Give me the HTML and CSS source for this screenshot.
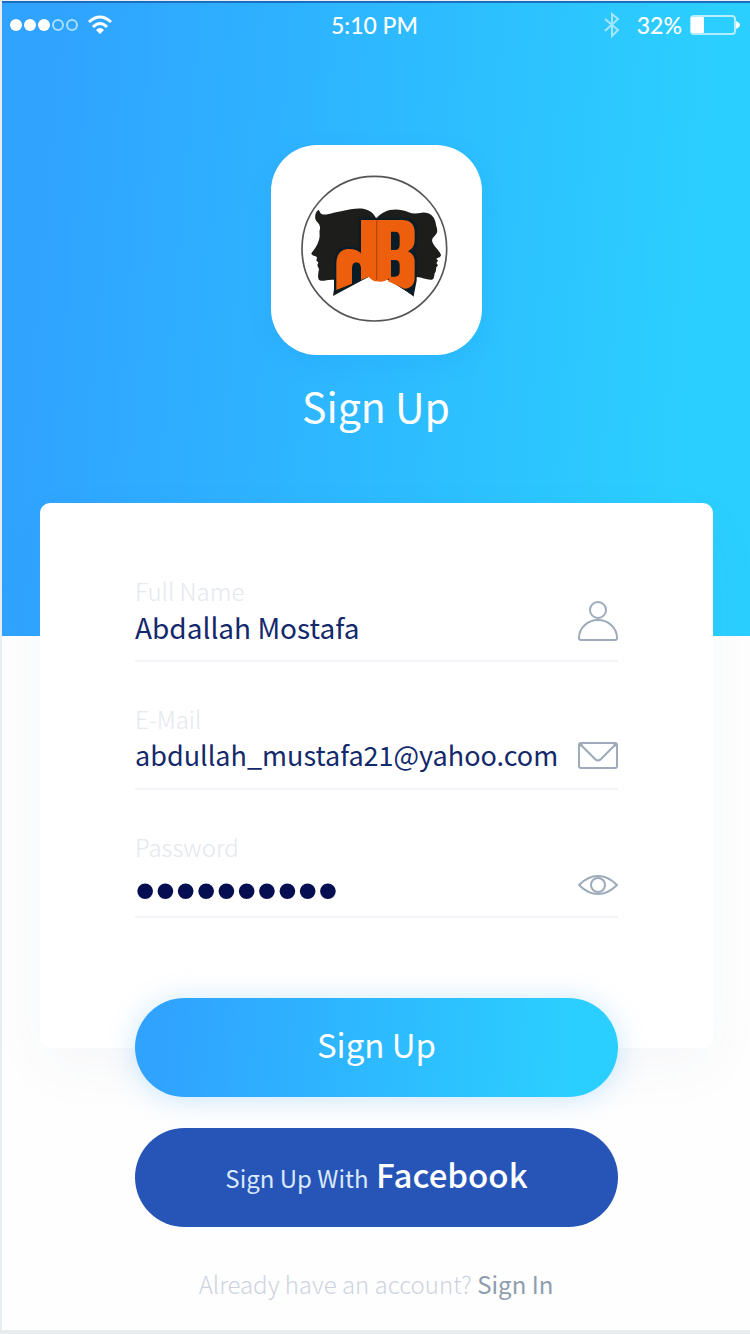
FILE: index.html
```html
<!DOCTYPE html>
<html lang="en">
<head>
<meta charset="utf-8">
<meta name="viewport" content="width=device-width, initial-scale=1">
<title>Sign Up</title>
<link rel="stylesheet" href="styles.css">
</head>
<body>
<div class="screen">
  <header class="hero">
    <div class="status">
      <div class="status-left">
        <svg class="signal" width="70" height="14" viewBox="0 0 70 14" aria-hidden="true">
          <g fill="#fff"><circle cx="7" cy="7" r="6"/><circle cx="21" cy="7" r="6"/><circle cx="35" cy="7" r="6"/></g>
          <g fill="none" stroke="#a5e0ff" stroke-width="2"><circle cx="49" cy="7" r="5"/><circle cx="63" cy="7" r="5"/></g>
        </svg>
        <svg width="26" height="20" viewBox="0 0 26 20" aria-hidden="true">
          <g fill="none" stroke="#fff" stroke-width="3"><path d="M2 7Q13-3 24 7"/><path d="M6 12Q13 5 20 12"/></g>
          <path d="M9 15Q13 11 17 15L13 19Z" fill="#fff"/>
        </svg>
      </div>
      <span class="time">5:10 PM</span>
      <div class="status-right">
        <svg width="18" height="26" viewBox="0 0 18 26" fill="none" stroke="#a3e6ff" stroke-width="2" aria-hidden="true"><path d="M2 7L15 18L9 24V2L15 7L2 19"/></svg>
        <span class="percent">32%</span>
        <svg width="50" height="20" viewBox="0 0 50 20" aria-hidden="true">
          <rect x="1" y="1" width="44" height="18" rx="3" fill="none" stroke="#b5edff" stroke-width="2"/>
          <rect x="1" y="2" width="13" height="16" rx="1" fill="#fff"/>
          <path d="M46 6Q50 8 50 10T46 14Z" fill="#fff"/>
        </svg>
      </div>
    </div>
    <div class="logo">
      <svg viewBox="0 0 630 630" role="img" aria-label="Logo">
        <circle cx="310" cy="311" r="217" fill="#fff" stroke="#555" stroke-width="5"/>
        <path fill="#1d1d1b" d="M143 194C131 200 130 220 136 228C144 236 148 242 147 251C143 263 149 273 143 287C139 303 128 314 121 325C121 333 133 331 138 337L136 347L142 352L139 361L144 373C141 386 139 402 146 406C157 411 169 402 193 405L186 453L293 395L325 407L353 400L429 455L423 421Q425 400 438 396C454 397 468 406 483 404C493 400 487 387 494 380L496 367L501 361L496 354L501 347L496 341C502 337 510 337 510 329C505 316 492 308 487 297C478 282 487 278 494 269C502 261 498 250 495 240C493 215 476 201 453 203C437 206 425 207 413 202C376 185 335 194 316 221C301 190 272 187 239 193L188 203C169 209 150 211 148 203Z"/>
        <path fill="#0a1c25" d="M263 218H402Q438 220 438 258V287Q438 303 429 315Q438 325 437 345V407L428 452L350 404L293 395L189 448V357Q190 307 230 304Q249 304 263 314Z"/>
        <path fill="#ee5f0d" d="M196 435V358C196 327 210 312 234 312Q258 312 270 325V225H318V409Q304 409 293 395L270 405V370Q269 352 256 352Q243 352 243 371V416Z"/>
        <path fill="#ee5f0d" fill-rule="evenodd" d="M317 225H393Q431 225 431 263V286Q431 309 411 319Q431 327 431 351V396Q431 430 400 431L351 409L356 399Q339 414 317 409ZM360 260V315H372Q386 315 386 300V276Q386 260 372 260ZM360 345V395H372Q386 395 386 379V361Q386 345 372 345Z"/>
        <path d="M317 226V405" stroke="#b9460b" stroke-width="4"/>
      </svg>
    </div>
    <h1 class="title">Sign Up</h1>
  </header>
  <main>
    <form class="form">
      <div class="card">
        <div class="field">
          <div class="entry">
            <label for="name">Full Name</label>
            <input id="name" type="text" value="Abdallah Mostafa">
          </div>
          <svg width="40" height="42" viewBox="0 0 40 42" aria-hidden="true"><circle cx="20" cy="10" r="8"/><path d="M1 38A19 18 0 0 1 39 38Q39 40 37 40H3Q1 40 1 38Z"/></svg>
        </div>
        <div class="field">
          <div class="entry">
            <label for="email">E-Mail</label>
            <input class="long" id="email" type="email" value="abdullah_mustafa21@yahoo.com">
          </div>
          <svg width="40" height="42" viewBox="0 0 40 42" aria-hidden="true"><rect x="1" y="15" width="38" height="25" rx="2"/><path d="M2 16L17 31Q20 34 23 31L38 16"/><path stroke-width="3" d="M2 16L4 18M38 16L36 18"/></svg>
        </div>
        <div class="field">
          <div class="entry">
            <label for="password">Password</label>
            <input class="secret" id="password" type="password" value="abdullah21">
          </div>
          <svg width="40" height="42" viewBox="0 0 40 42" aria-hidden="true"><path d="M1 29Q10 20 20 20T39 29Q30 38 20 38T1 29Z"/><circle cx="20" cy="29" r="7"/></svg>
        </div>
      </div>
      <div class="actions">
        <button class="btn btn-primary" type="submit">Sign Up</button>
        <button class="btn btn-facebook" type="button"><span>Sign Up With</span> <strong>Facebook</strong></button>
      </div>
    </form>
    <p class="footer">Already have an account? <a href="#">Sign In</a></p>
  </main>
</div>
</body>
</html>
```
FILE: styles.css
```css
* { box-sizing: border-box; }

body {
  margin: 0;
  background: #e9edf1;
  font-family: "Noto Sans CJK SC", "Noto Sans", sans-serif;
}

.screen {
  min-height: calc(100vh - 5px);
  margin: 1px 0 4px 2px;
  background: #fefefe;
}

.hero {
  display: flex;
  flex-direction: column;
  align-items: center;
  padding-bottom: 203px;
  border-top: 2px solid #1b6dc0;
  background: linear-gradient(95deg, #30a2ff 5%, #2bcfff 90%);
  color: #fff;
}

.status {
  display: grid;
  grid-template-columns: 1fr auto 1fr;
  align-items: center;
  align-self: stretch;
  height: 44px;
  padding: 0 10px 0 7px;
  font: 500 23px/30px Lato, sans-serif;
}

.status-left,
.status-right {
  display: flex;
  align-items: center;
  gap: 8px;
}

.status-right { justify-content: flex-end; }
.percent { margin-left: 8px; }

.logo {
  width: 211px;
  height: 210px;
  margin-top: 98px;
  border-radius: 46px;
  background: #fff;
  box-shadow: 0 8px 24px rgba(20, 120, 230, 0.12);
}

.logo svg { display: block; width: 210px; height: 210px; }

.title {
  margin: 22px 0 0;
  font-size: 41px;
  line-height: 56px;
  font-weight: 400;
}

.card {
  margin: -133px 37px 0 38px;
  padding: 72px 95px 130px;
  border-radius: 10px;
  background: #fff;
  box-shadow: 0 20px 60px rgba(40, 70, 120, 0.04);
}

.field {
  display: flex;
  align-items: flex-end;
  gap: 12px;
  height: 87px;
  padding-bottom: 18px;
  border-bottom: 2px solid #f3f4f9;
}

.field + .field { margin-top: 41px; }
.field svg { flex: none; fill: none; stroke: #9dabbb; stroke-width: 2; }

.entry { flex: 1; min-width: 0; margin-bottom: -4px; }

label {
  display: block;
  color: #e4e8ee;
  font-size: 24px;
  line-height: 34px;
  font-weight: 300;
}

input {
  display: block;
  width: 100%;
  height: 38px;
  padding: 0;
  border: 0;
  outline: 0;
  background: none;
  color: #14296b;
  font: 400 28px/38px "Noto Sans CJK SC", "Noto Sans", sans-serif;
}

.long { font-size: 27px; }

.secret {
  padding-top: 12px;
  color: #050e50;
  font: 400 58px/26px "Liberation Sans", sans-serif;
}

.actions {
  display: grid;
  gap: 31px;
  margin: -50px 132px 0 133px;
}

.btn {
  height: 99px;
  padding: 0 0 8px;
  border: 0;
  border-radius: 50px;
  color: #fff;
  font: 400 33px/48px "Noto Sans CJK SC", "Noto Sans", sans-serif;
}

.btn-primary {
  background: linear-gradient(95deg, #30a2ff 5%, #2bcfff 90%);
  box-shadow: 0 2px 28px rgba(48, 162, 255, 0.25);
}

.btn-facebook { padding-bottom: 4px; background: #2754b7; }
.btn-facebook span { color: #d9e9fb; font-size: 24px; }
.btn-facebook strong { font-weight: 500; }

.footer {
  margin: 0;
  padding: 39px 0 28px;
  color: #cdd3de;
  font-size: 24px;
  line-height: 36px;
  font-weight: 300;
  text-align: center;
}

.footer a { color: #8f9dae; font-weight: 400; text-decoration: none; }
```
